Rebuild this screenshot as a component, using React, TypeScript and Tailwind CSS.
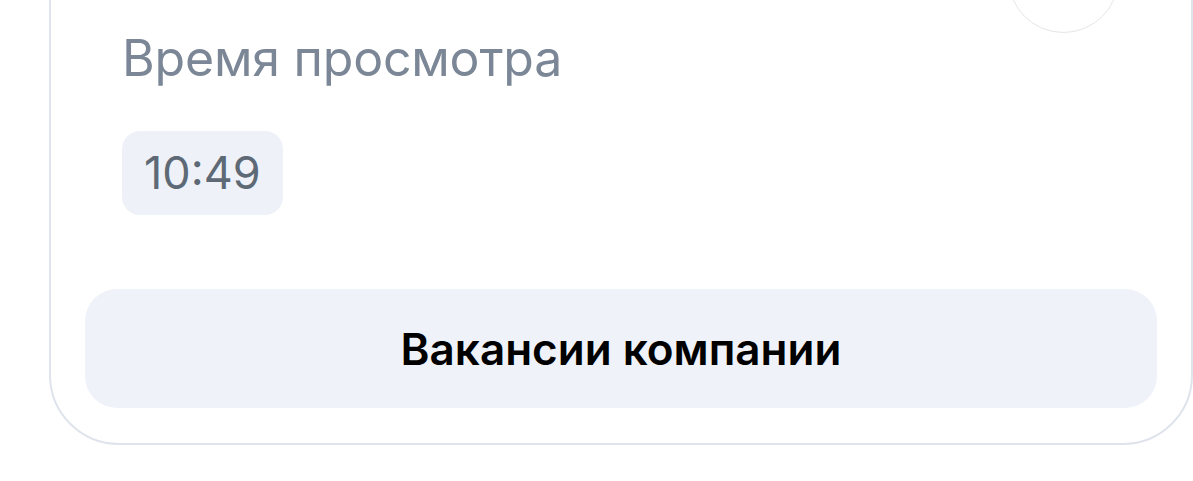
export default function App() {
  return (
    <div className="w-[1193px] h-[481px] overflow-hidden bg-white" style={{ fontFamily: "Inter, 'Noto Sans', sans-serif" }}>
      {/* CARD */}
      <div className="-mt-[110px] ml-[49px] w-[1144px] rounded-[70px] border-2 border-[#dfe4ec] bg-white px-[34px] pb-[35px]">
        {/* HEADER ROW */}
        <div className="flex justify-end pr-[38px] pt-[30px]">
          <div className="h-[111px] w-[111px] rounded-full border-[1.5px] border-[#e6e6e6]" />
        </div>

        {/* VIEW TIME */}
        <div className="px-[37px]">
          <div className="text-[50px] leading-[50px] text-[#7b8796] tracking-[-0.2px]">
            Время просмотра
          </div>
          <div className="mt-[48px] inline-flex h-[84px] items-center rounded-[18px] bg-[#eef2f8] px-[22px] text-[45px] text-[#5e6976]">
            10:49
          </div>
        </div>

        {/* BUTTON */}
        <button className="mt-[74px] flex h-[119px] w-full items-center justify-center rounded-[32px] bg-[#eff2f9] text-[44px] font-semibold text-black">
          Вакансии компании
        </button>
      </div>
    </div>
  );
}
